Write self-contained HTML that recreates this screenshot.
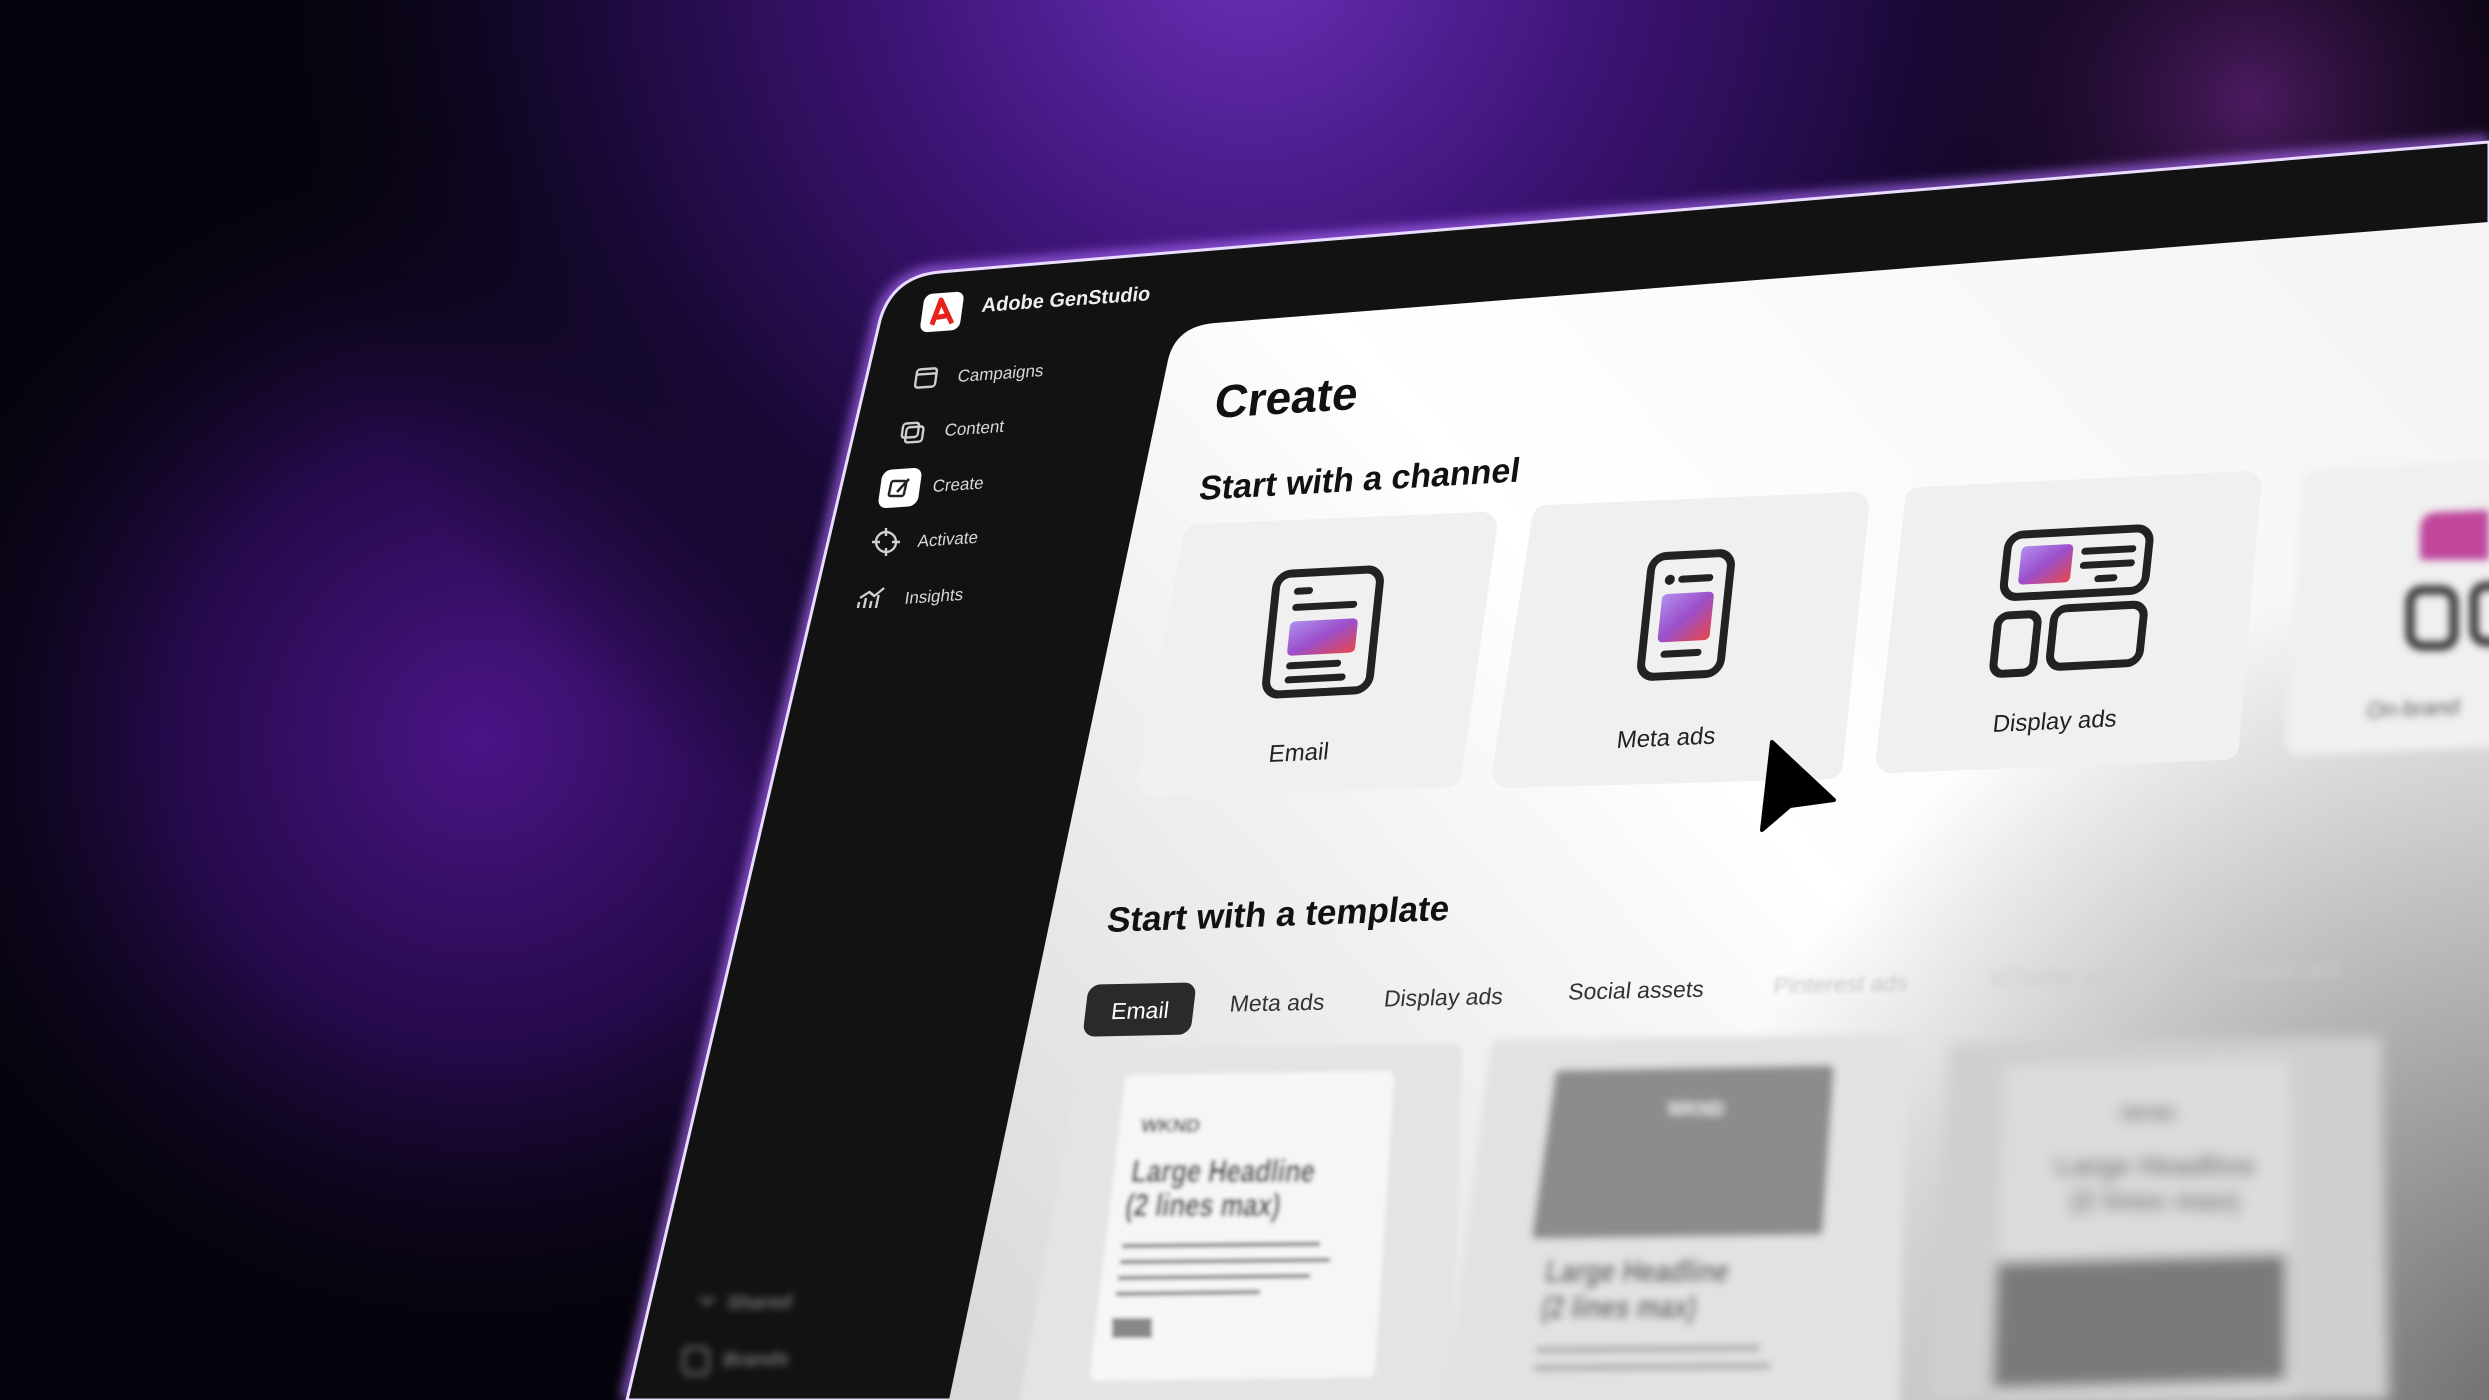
<!DOCTYPE html>
<html><head><meta charset="utf-8"><style>
html,body{margin:0;padding:0;width:2489px;height:1400px;overflow:hidden;background:#05030b}
svg{display:block}
text{font-family:"Liberation Sans",sans-serif}
</style></head><body>
<svg width="2489" height="1400" viewBox="0 0 2489 1400" xmlns="http://www.w3.org/2000/svg">
<defs>
<radialGradient id="bg1" cx="1250" cy="-60" r="1000" gradientUnits="userSpaceOnUse">
<stop offset="0" stop-color="#6a30b8"/><stop offset="0.35" stop-color="#3e1478"/><stop offset="0.7" stop-color="#170833"/><stop offset="1" stop-color="#0a0515" stop-opacity="0"/></radialGradient>
<radialGradient id="bg2" cx="480" cy="740" r="620" gradientUnits="userSpaceOnUse">
<stop offset="0" stop-color="#4a1486"/><stop offset="0.5" stop-color="#240a4a"/><stop offset="1" stop-color="#0a0515" stop-opacity="0"/></radialGradient>
<radialGradient id="bg3" cx="2250" cy="100" r="400" gradientUnits="userSpaceOnUse">
<stop offset="0" stop-color="#7a2a9a" stop-opacity="0.6"/><stop offset="1" stop-color="#0a0515" stop-opacity="0"/></radialGradient>
<linearGradient id="panel" x1="2300" y1="250" x2="1000" y2="1400" gradientUnits="userSpaceOnUse">
<stop offset="0" stop-color="#f5f5f5"/><stop offset="0.45" stop-color="#ffffff"/><stop offset="1" stop-color="#d9d9d9"/></linearGradient>
<radialGradient id="shade" cx="2550" cy="1450" r="900" gradientUnits="userSpaceOnUse">
<stop offset="0" stop-color="#000" stop-opacity="0.6"/><stop offset="1" stop-color="#000" stop-opacity="0"/></radialGradient>
<linearGradient id="img" x1="0" y1="0" x2="1" y2="1"><stop offset="0" stop-color="#b28ef0"/><stop offset="0.5" stop-color="#9b4fc9"/><stop offset="1" stop-color="#e8464a"/></linearGradient>
<filter id="glow" x="-20%" y="-20%" width="140%" height="140%"><feGaussianBlur stdDeviation="6"/></filter>
<filter id="b2"><feGaussianBlur stdDeviation="2"/></filter>
<filter id="b4"><feGaussianBlur stdDeviation="4"/></filter>
<filter id="b7"><feGaussianBlur stdDeviation="7"/></filter>
</defs>
<rect width="2489" height="1400" fill="#05030b"/>
<rect width="2489" height="1400" fill="url(#bg2)"/>
<rect width="2489" height="1400" fill="url(#bg1)"/>
<rect width="2489" height="1400" fill="url(#bg3)"/>

<!-- window rim glow -->
<path d="M627,1400 L880,320 Q893,276 940,272 L2489,142" fill="none" stroke="#b070ff" stroke-width="12" filter="url(#glow)" opacity="0.8"/>
<path d="M627,1400 L880,320 Q893,276 940,272 L2489,142 L2489,1400 Z" fill="#121212" stroke="#eadcff" stroke-width="3"/>

<!-- content panel -->
<path d="M949,1400 L1168,360 Q1176,326 1215,323 L2489,222 L2489,1400 Z" fill="url(#panel)"/>
<path d="M949,1400 L1168,360 Q1176,326 1215,323 L2489,222 L2489,1400 Z" fill="url(#shade)"/>

<!-- sidebar -->
<rect x="-20" y="-19" width="40" height="38" rx="8" fill="#fff" transform="translate(942,312) rotate(-4) skewX(-12)"/>
<path d="M-11,12 L0,-12 L9,12 M-6,5 L5,4" stroke="#e5231b" stroke-width="5" fill="none" stroke-linejoin="round" transform="translate(942,312) rotate(-4)"/>
<text transform="translate(981,312) rotate(-4) skewX(-12)" font-size="20" font-weight="bold" fill="#eee">Adobe GenStudio</text>
<g fill="#d8d8d8" font-size="17">
<text transform="translate(957,382) rotate(-4) skewX(-12)">Campaigns</text>
<text transform="translate(944,436) rotate(-4) skewX(-12)">Content</text>
<text transform="translate(932,492) rotate(-4) skewX(-12)">Create</text>
<text transform="translate(917,547) rotate(-4) skewX(-12)">Activate</text>
<text transform="translate(904,604) rotate(-4) skewX(-12)">Insights</text>
</g>
<g fill="none" stroke="#cfcfcf" stroke-width="2.4">
<rect x="-10" y="-9" width="20" height="18" rx="3" transform="translate(926,378) rotate(-4) skewX(-12)"/>
<path d="M-10,-4 L10,-4" transform="translate(926,378) rotate(-4)"/>
<rect x="-8" y="-6" width="17" height="15" rx="3" transform="translate(914,433) rotate(-4) skewX(-12)"/>
<rect x="-12" y="-10" width="16" height="14" rx="3" transform="translate(914,433) rotate(-4) skewX(-12)"/>
<circle cx="0" cy="0" r="10" transform="translate(886,542)"/>
<path d="M-14,0 L-6,0 M6,0 L14,0 M0,-14 L0,-6 M0,6 L0,14" transform="translate(886,542)"/>
<path d="M-12,10 L-12,4 M-6,10 L-6,0 M0,10 L0,3 M6,10 L6,-3 M-12,0 L-4,-6 L2,-2 L10,-10" transform="translate(872,598) skewX(-12)"/>
</g>
<rect x="-20" y="-19" width="40" height="38" rx="9" fill="#fff" transform="translate(900,488) rotate(-4) skewX(-12)"/>
<rect x="-8" y="-8" width="15" height="15" rx="2" stroke="#222" stroke-width="2.5" fill="none" transform="translate(898,489) skewX(-12)"/>
<path d="M-3,4 L9,-9" stroke="#222" stroke-width="2.5" fill="none" transform="translate(900,488)"/>

<g filter="url(#b4)" fill="#777" font-size="19" font-weight="bold">
<text transform="translate(726,1309) rotate(-1) skewX(-14)">Shared</text>
<text transform="translate(722,1366) rotate(-1) skewX(-14)">Brands</text>
<path d="M700,1297 L707,1304 L714,1297" stroke="#777" stroke-width="3" fill="none"/>
<rect x="684" y="1348" width="24" height="26" rx="5" stroke="#777" stroke-width="3" fill="none"/>
</g>

<!-- titles -->
<text transform="translate(1213,418) rotate(-3.6) skewX(-11)" font-size="46" font-weight="bold" fill="#111">Create</text>
<text transform="translate(1198,500) rotate(-3.3) skewX(-11)" font-size="34" font-weight="bold" fill="#111">Start with a channel</text>

<!-- channel cards -->
<g fill="#f0f0f0" stroke="#f0f0f0" stroke-width="30" stroke-linejoin="round">
<polygon points="1198,539 1482,527 1447,772 1152,782"/>
<polygon points="1547,520 1854,507 1828,764 1507,773"/>
<polygon points="1920,502 2246,486 2224,745 1891,758"/>
<polygon points="2317,484 2489,476 2489,732 2300,740" filter="url(#b4)"/>
</g>

<!-- email icon -->
<g transform="translate(1323,632) rotate(-3) skewX(-9)">
<rect x="-52" y="-60" width="104" height="120" rx="14" fill="none" stroke="#222" stroke-width="8"/>
<path d="M-30,-42 L-18,-42 M-30,-26 L28,-26 M-30,32 L18,32 M-30,46 L24,46" stroke="#222" stroke-width="7" stroke-linecap="round"/>
<rect x="-34" y="-12" width="68" height="34" rx="5" fill="url(#img)"/>
</g>
<text transform="translate(1268,762) rotate(-2.6) skewX(-9)" font-size="24" fill="#222">Email</text>
<!-- meta icon -->
<g transform="translate(1686,615) rotate(-3) skewX(-9)">
<rect x="-40" y="-60" width="80" height="120" rx="14" fill="none" stroke="#222" stroke-width="8"/>
<circle cx="-20" cy="-36" r="5" fill="#222"/>
<path d="M-8,-36 L20,-36 M-18,38 L16,38" stroke="#222" stroke-width="7" stroke-linecap="round"/>
<rect x="-26" y="-22" width="52" height="48" rx="5" fill="url(#img)"/>
</g>
<text transform="translate(1616,748) rotate(-2.6) skewX(-9)" font-size="24" fill="#222">Meta ads</text>
<!-- display icon -->
<g transform="translate(2072,598) rotate(-3) skewX(-9)">
<rect x="-70" y="-66" width="142" height="62" rx="14" fill="none" stroke="#222" stroke-width="8"/>
<rect x="-56" y="-54" width="52" height="38" rx="5" fill="url(#img)"/>
<path d="M8,-46 L56,-46 M8,-32 L56,-32 M24,-18 L40,-18" stroke="#222" stroke-width="7" stroke-linecap="round"/>
<rect x="-72" y="14" width="40" height="58" rx="10" fill="none" stroke="#222" stroke-width="8"/>
<rect x="-16" y="10" width="90" height="58" rx="12" fill="none" stroke="#222" stroke-width="8"/>
</g>
<text transform="translate(1992,732) rotate(-2.6) skewX(-9)" font-size="24" fill="#222">Display ads</text>
<g filter="url(#b4)">
<path d="M2420,560 L2420,530 Q2420,512 2440,512 L2489,510 L2489,560 Z" fill="#c0479c"/>
<rect x="2410" y="590" width="44" height="56" rx="12" fill="none" stroke="#333" stroke-width="9"/>
<rect x="2474" y="586" width="60" height="56" rx="12" fill="none" stroke="#333" stroke-width="9"/>
<text transform="translate(2366,718) rotate(-2.5) skewX(-9)" font-size="22" fill="#555">On-brand</text>
</g>

<!-- cursor -->
<path d="M1772,742 L1762,830 L1790,806 L1834,800 Z" fill="#000" stroke="#000" stroke-width="4" stroke-linejoin="round"/>

<!-- template -->
<text transform="translate(1106,932) rotate(-2) skewX(-9)" font-size="35" font-weight="bold" fill="#111">Start with a template</text>
<g transform="rotate(-1.2 1500 990)">
<rect x="1088" y="976" width="108" height="52" rx="12" fill="#2a2a2a" transform="skewX(-8) translate(138,0)"/>
<g font-size="23" transform="skewX(-8) translate(138,0)">
<text x="1114" y="1011" fill="#fff">Email</text>
<text x="1232" y="1006" fill="#333">Meta ads</text>
<text x="1386" y="1004" fill="#333">Display ads</text>
<text x="1570" y="1001" fill="#333">Social assets</text>
<g filter="url(#b2)"><text x="1775" y="999" fill="#c8c8c8">Pinterest ads</text></g>
<g filter="url(#b4)"><text x="1990" y="996" fill="#ccc">X/Twitter ads</text>
<text x="2215" y="994" fill="#ccc">Youtube ads</text></g>
</g>
</g>

<!-- template cards -->
<g filter="url(#b2)">
<polygon points="1090,1058 1452,1054 1442,1400 1030,1400" fill="#e4e4e4" stroke="#e4e4e4" stroke-width="20" stroke-linejoin="round"/>
<polygon points="1132,1082 1387,1078 1368,1370 1097,1374" fill="#f6f6f6" stroke="#f6f6f6" stroke-width="14" stroke-linejoin="round"/>
<text transform="translate(1140,1132) skewX(-9)" font-size="19" font-weight="bold" fill="#444">WKND</text>
<text transform="translate(1130,1182) skewX(-9) scale(0.8,1)" font-size="32" font-weight="bold" fill="#333">Large Headline</text>
<text transform="translate(1124,1216) skewX(-9) scale(0.8,1)" font-size="32" font-weight="bold" fill="#333">(2 lines max)</text>
<g stroke="#777" stroke-width="4"><path d="M1122,1246 L1320,1244 M1120,1262 L1330,1260 M1118,1278 L1310,1276 M1116,1294 L1260,1292"/></g>
<rect x="1112" y="1318" width="40" height="20" fill="#888"/>
</g>
<g filter="url(#b4)">
<polygon points="1500,1050 1897,1044 1889,1400 1456,1400" fill="#e2e2e2" stroke="#e2e2e2" stroke-width="20" stroke-linejoin="round"/>
<polygon points="1560,1075 1829,1070 1818,1230 1537,1234" fill="#8c8c8c" stroke="#8c8c8c" stroke-width="10" stroke-linejoin="round"/>
<text x="1668" y="1115" font-size="18" font-weight="bold" fill="#eee">WKND</text>
<text transform="translate(1544,1282) skewX(-9) scale(0.8,1)" font-size="32" font-weight="bold" fill="#555">Large Headline</text>
<text transform="translate(1540,1318) skewX(-9) scale(0.8,1)" font-size="32" font-weight="bold" fill="#555">(2 lines max)</text>
<path d="M1536,1350 L1760,1348 M1534,1368 L1770,1366" stroke="#999" stroke-width="5"/>
</g>
<g filter="url(#b7)">
<polygon points="1950,1044 2381,1036 2389,1400 1930,1400" fill="#cfcfcf"/>
<polygon points="2005,1066 2290,1060 2292,1400 1995,1400" fill="#dcdcdc"/>
<text x="2120" y="1120" font-size="18" font-weight="bold" fill="#555">WKND</text>
<text x="2055" y="1175" font-size="28" font-weight="bold" fill="#666">Large Headline</text>
<text x="2070" y="1210" font-size="28" font-weight="bold" fill="#666">(2 lines max)</text>
<polygon points="1997,1262 2286,1254 2286,1381 1992,1389" fill="#7a7a7a"/>
</g>
</svg>
</body></html>
